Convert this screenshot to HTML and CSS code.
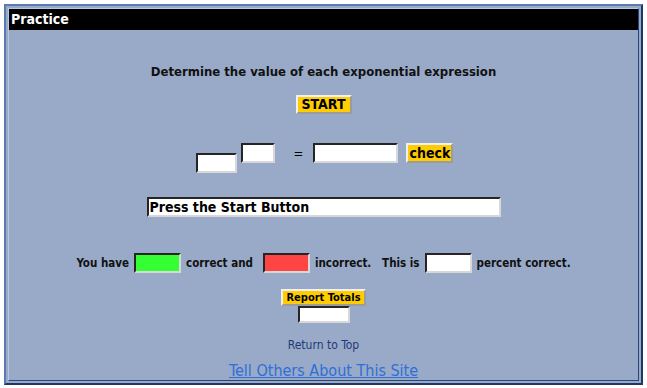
FILE: index.html
```html
<!DOCTYPE html>
<html lang="en">
<head>
    <meta charset="UTF-8">
    <title>Practice</title>
    <link rel="stylesheet" href="styles.css">
</head>
<body>
    <div class="frame">
        <div class="cell">
            <h1 class="title">Practice</h1>

            <p class="intro">Determine the value of each exponential expression</p>
            <button class="btn btn-start">START</button>

            <div class="problem">
                <input class="box base" type="text">
                <input class="box power" type="text">
                <span class="equals">=</span>
                <input class="box answer" type="text">
                <button class="btn btn-check">check</button>
            </div>

            <input class="box message" type="text" value="Press the Start Button">

            <div class="stats">
                <span>You have</span>
                <input class="box count good" type="text">
                <span>correct and</span>
                <input class="box count bad" type="text">
                <span>incorrect.&nbsp;&nbsp; This is</span>
                <input class="box count" type="text">
                <span>percent correct.</span>
            </div>

            <button class="btn btn-report">Report Totals</button>
            <input class="box total" type="text">

            <a class="top-link" href="#">Return to Top</a>
            <a class="tell-link" href="#">Tell Others About This Site</a>
        </div>
    </div>
</body>
</html>
```

FILE: styles.css
```css
body {
    margin: 0;
    padding: 4px;
    background-color: #ffffff;
    font-family: "DejaVu Sans Condensed", "DejaVu Sans", sans-serif;
}
.frame {
    height: 381px;
    box-sizing: border-box;
    border: 2px solid;
    border-color: #5b7bb0 #1e3763 #1e3763 #5b7bb0;
    padding: 2px;
    background-color: #98aac7;
}
.cell {
    height: 100%;
    box-sizing: border-box;
    border: 1px solid;
    border-color: #b9c8e0 #2a4677 #2a4677 #b9c8e0;
    display: flex;
    flex-direction: column;
    align-items: center;
}
.title {
    align-self: stretch;
    margin: 0;
    height: 23px;
    padding: 0 2px;
    background-color: #000000;
    color: #ffffff;
    font-size: 14px;
    line-height: 21px;
}
.intro {
    margin: 34px 0 0;
    font-size: 13px;
    font-weight: bold;
    color: #111111;
}
.btn {
    font-family: inherit;
    font-weight: bold;
    background-color: #ffcc00;
    color: #000000;
    border: 2px outset #f0f0f0;
    padding: 0 4px;
    cursor: pointer;
}
.btn-start {
    margin-top: 16px;
    height: 19px;
    font-size: 14px;
    line-height: 15px;
}
.box {
    box-sizing: border-box;
    background-color: #ffffff;
    border: 2px inset #8a8a8a;
    border-color: #7a7a7a #d8d8d8 #d8d8d8 #7a7a7a;
    margin: 0;
    font-family: inherit;
}
.problem {
    margin-top: 29px;
    display: flex;
    align-items: flex-start;
    margin-left: 2px;
}
.base {
    width: 41px;
    height: 20px;
    margin-top: 10px;
}
.power {
    width: 34px;
    height: 20px;
    margin-left: 4px;
}
.equals {
    font-size: 13px;
    margin: 3px 10px 0 19px;
}
.answer {
    width: 85px;
    height: 20px;
}
.btn-check {
    margin-left: 8px;
    height: 20px;
    width: 47px;
    padding: 0;
    font-size: 14px;
    line-height: 15px;
}
.message {
    margin-top: 24px;
    width: 354px;
    height: 21px;
    font-size: 14px;
    font-weight: bold;
    padding: 0 1px;
    color: #000000;
}
.stats {
    margin-top: 36px;
    display: flex;
    align-items: center;
    gap: 5px;
    font-size: 11.5px;
    font-weight: bold;
    color: #111111;
}
.count {
    width: 47px;
    height: 20px;
}
.good {
    background-color: #33ff33;
}
.bad {
    background-color: #ff4444;
    margin-left: 5px;
}
.btn-report {
    margin-top: 16px;
    height: 18px;
    font-size: 11px;
    line-height: 12px;
    padding: 0 3px;
}
.total {
    width: 52px;
    height: 17px;
}
.top-link {
    margin-top: 15px;
    font-size: 12px;
    color: #1f3a78;
    text-decoration: none;
}
.tell-link {
    margin-top: 9px;
    font-size: 16px;
    color: #2f6fd6;
}
```
